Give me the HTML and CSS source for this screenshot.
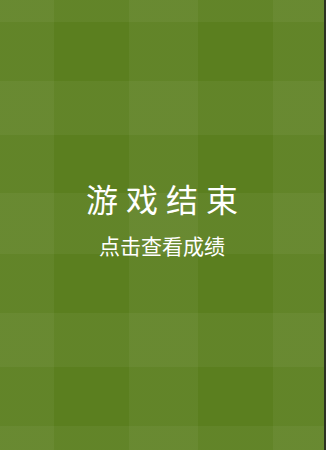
FILE: index.html
```html
<!DOCTYPE html>
<html lang="zh-CN">
<head>
<meta charset="utf-8">
<title>游戏结束</title>
<link rel="stylesheet" href="styles.css">
</head>
<body>
<main class="screen">
  <div class="rows">
    <h1 class="title">游戏结束</h1>
    <p class="subtitle">点击查看成绩</p>
  </div>
</main>
</body>
</html>
```

FILE: styles.css
```css
html, body {
  margin: 0;
  padding: 0;
  background: #2e3325;
}

.screen {
  width: 324px;
  height: 450px;
  border-right: 2px solid #2b3222;
  background-color: #5b7f1f;
  background-image: linear-gradient(to right,
    rgba(255,255,255,0.045) 0 54px,
    transparent 54px 129px,
    rgba(255,255,255,0.045) 129px 198px,
    transparent 198px 273px,
    rgba(255,255,255,0.045) 273px 324px);
  font-family: "Noto Sans CJK SC", "Noto Sans", sans-serif;
  color: #ffffff;
}

.rows {
  height: 450px;
  box-sizing: border-box;
  padding-top: 182px;
  text-align: center;
  background-image: linear-gradient(to bottom,
    rgba(255,255,255,0.045) 0 22px,
    transparent 22px 81px,
    rgba(255,255,255,0.045) 81px 135px,
    transparent 135px 193px,
    rgba(255,255,255,0.045) 193px 254px,
    transparent 254px 313px,
    rgba(255,255,255,0.045) 313px 367px,
    transparent 367px 426px,
    rgba(255,255,255,0.045) 426px 450px);
}

.title {
  margin: 0;
  font-size: 32px;
  line-height: 32px;
  font-weight: 400;
  letter-spacing: 8px;
  text-indent: 8px;
}

.subtitle {
  margin: 21px 0 0;
  font-size: 21px;
  line-height: 21px;
  font-weight: 400;
}
```
